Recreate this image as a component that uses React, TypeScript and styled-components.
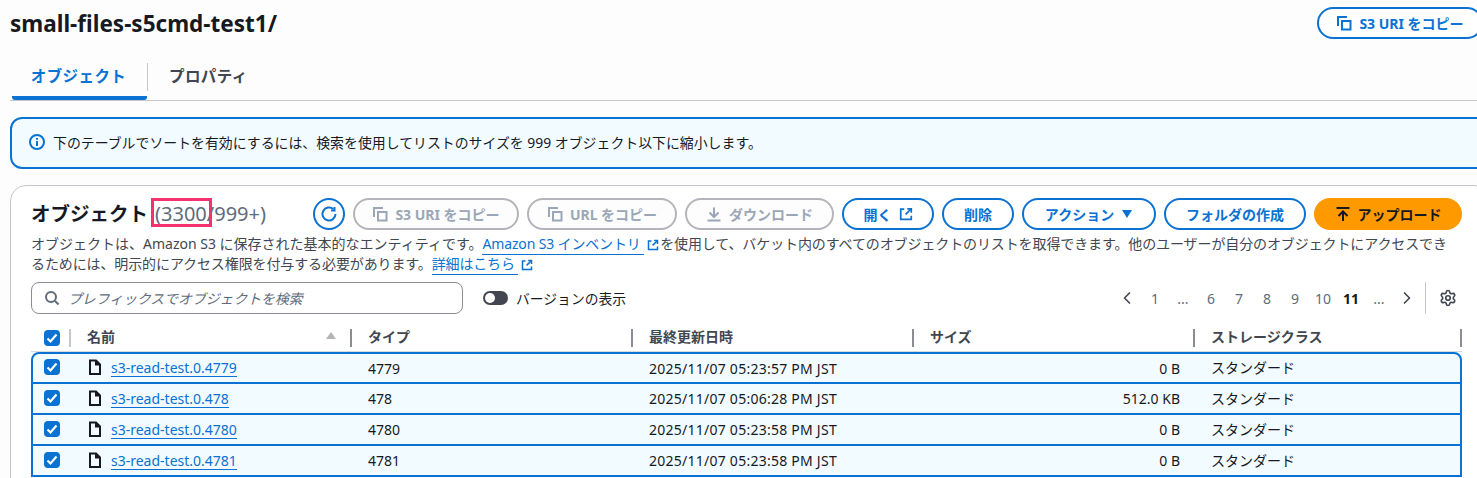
import React from "react";
import styled, { createGlobalStyle } from "styled-components";
import { ChevronLeft, ChevronRight, Settings } from "lucide-react";

const BLUE = "#0972d3";
const MUTED = "#5f6b7a";
const DISABLED = "#9ba7b6";
const INK = "#16191f";

const GlobalStyle = createGlobalStyle`
  html, body {
    margin: 0;
    height: 100%;
    overflow: hidden;
    background: #fdfdfd;
  }
  body {
    font-family: "Noto Sans", "Noto Sans CJK JP", sans-serif;
    color: ${INK};
  }
`;

const Page = styled.div`
  width: 1477px;
  height: 478px;
  overflow: hidden;
  padding-left: 10px;
  box-sizing: border-box;
`;

const TitleRow = styled.header`
  display: flex;
  justify-content: space-between;
  width: 1473px;
  height: 47px;
  padding-top: 7px;
  box-sizing: border-box;
`;

const Title = styled.h1`
  margin: 0;
  font-size: 22.5px;
  line-height: 34px;
  font-weight: 700;
  color: ${INK};
`;

const Tabs = styled.nav`
  display: flex;
  width: 1467px;
  height: 47px;
  margin-top: 7px;
  box-sizing: border-box;
  border-bottom: 1px solid #c6c6cd;
`;

const Tab = styled.div<{ $active?: boolean }>`
  width: ${(p) => (p.$active ? "135px" : "auto")};
  margin-left: ${(p) => (p.$active ? "2px" : "0")};
  padding-left: ${(p) => (p.$active ? "0" : "21px")};
  padding-right: ${(p) => (p.$active ? "2px" : "0")};
  height: 37px;
  margin-top: 9px;
  box-sizing: border-box;
  display: flex;
  align-items: center;
  justify-content: center;
  padding-bottom: ${(p) => (p.$active ? "9px" : "13px")};
  font-size: 15.5px;
  font-weight: 700;
  letter-spacing: 0.4px;
  color: ${(p) => (p.$active ? BLUE : "#414750")};
  border-bottom: ${(p) => (p.$active ? `4px solid ${BLUE}` : "none")};
  border-radius: 0 0 3px 3px;
`;

const TabDivider = styled.div`
  width: 1px;
  height: 28px;
  margin-top: 9px;
  background: #c6c6cd;
`;

const Alert = styled.div`
  width: 1480px;
  height: 52px;
  margin-top: 16px;
  box-sizing: border-box;
  border: 2px solid ${BLUE};
  border-radius: 12px;
  background: #f2fbff;
  display: flex;
  align-items: center;
  gap: 8px;
  padding: 0 0 2px 17px;
  font-size: 13.9px;
  color: ${INK};
  svg {
    color: ${BLUE};
    flex: none;
  }
`;

const Panel = styled.section`
  position: relative;
  width: 1480px;
  margin-top: 16px;
  height: 320px;
  box-sizing: border-box;
  border: 1px solid #c6c6cd;
  border-radius: 16px;
  background: #fff;
  padding: 12px 0 0 20px;
`;

const PanelHead = styled.div`
  display: flex;
  align-items: center;
  height: 32px;
`;

const Heading = styled.h2`
  margin: 0 0 3px;
  width: 124px;
  font-size: 19.5px;
  font-weight: 700;
  white-space: nowrap;
  color: ${INK};
`;

const Count = styled.span`
  width: 158px;
  margin-bottom: 2px;
  font-size: 20px;
  color: ${MUTED};
`;

const Highlight = styled.div`
  position: absolute;
  left: 140px;
  top: 12px;
  width: 61px;
  height: 29px;
  box-sizing: border-box;
  border: 3px solid #f5316f;
`;

const Actions = styled.div`
  display: flex;
  gap: 8px;
`;

const IconButton = styled.button`
  width: 32px;
  height: 32px;
  padding: 0;
  border: 2px solid ${BLUE};
  border-radius: 50%;
  background: #fff;
  color: ${BLUE};
  display: flex;
  align-items: center;
  justify-content: center;
`;

const Pill = styled.button<{ $w: number; $tone?: "normal" | "disabled" | "primary" }>`
  width: ${(p) => p.$w}px;
  height: 32px;
  padding: 0;
  box-sizing: border-box;
  border-radius: 16px;
  display: flex;
  align-items: center;
  justify-content: center;
  gap: 7px;
  font-family: inherit;
  font-size: 14px;
  font-weight: 700;
  white-space: nowrap;
  background: ${(p) =>
    p.$tone === "primary" ? "#ff9900" : p.$tone === "disabled" ? "#fdfdfd" : "#fff"};
  color: ${(p) =>
    p.$tone === "primary" ? INK : p.$tone === "disabled" ? DISABLED : BLUE};
  border: 2px solid
    ${(p) =>
      p.$tone === "primary" ? "#ff9900" : p.$tone === "disabled" ? "#b4b4bb" : BLUE};
  svg {
    flex: none;
  }
`;

const Description = styled.p`
  margin: 4px 0 0;
  width: 1425px;
  font-size: 14px;
  line-height: 20px;
  color: #414750;
`;

const Tight = styled.span`
  letter-spacing: -0.11px;
`;

const TextLink = styled.a`
  color: ${BLUE};
  border-bottom: 1px solid ${BLUE};
  padding-bottom: 1px;
  letter-spacing: -0.15px;
`;

const External = styled.span`
  display: inline-block;
  color: ${BLUE};
  margin: 0 1px 0 3px;
  vertical-align: -2px;
  line-height: 0;
`;

const Filters = styled.div`
  display: flex;
  align-items: center;
  width: 1431px;
  height: 32px;
  margin-top: 8px;
  padding-right: 6px;
  box-sizing: border-box;
`;

const Search = styled.div`
  width: 432px;
  height: 32px;
  box-sizing: border-box;
  border: 1px solid #8c8c94;
  border-radius: 8px;
  background: #fff;
  display: flex;
  align-items: center;
  gap: 8px;
  padding-left: 12px;
  font-size: 13.85px;
  font-style: italic;
  color: ${MUTED};
  svg {
    flex: none;
    color: ${MUTED};
  }
`;

const Toggle = styled.div`
  width: 25px;
  height: 14px;
  margin-left: 20px;
  border-radius: 7px;
  background: #424650;
  position: relative;
  &::after {
    content: "";
    position: absolute;
    left: 2px;
    top: 2px;
    width: 10px;
    height: 10px;
    border-radius: 50%;
    background: #fff;
  }
`;

const ToggleLabel = styled.span`
  margin-left: 8px;
  font-size: 13.8px;
  color: ${INK};
`;

const Pager = styled.div`
  margin-left: auto;
  display: flex;
  align-items: center;
  height: 32px;
  font-size: 14px;
  color: ${MUTED};
`;

const PageNo = styled.span<{ $current?: boolean }>`
  width: 28px;
  text-align: center;
  font-weight: ${(p) => (p.$current ? 700 : 400)};
  color: ${(p) => (p.$current ? INK : MUTED)};
`;

const PagerArrow = styled.span`
  width: 28px;
  display: flex;
  justify-content: center;
  color: #414750;
`;

const PagerEnd = styled.div`
  height: 32px;
  margin-left: 4px;
  padding-left: 13px;
  margin-right: -1px;
  border-left: 1px solid #c6c6cd;
  display: flex;
  align-items: center;
  color: #414750;
`;

const Grid = styled.div`
  display: grid;
  grid-template-columns: 40px 281px 281px 281px 281px 267px;
  width: 1431px;
  box-sizing: border-box;
`;

const HeaderRow = styled(Grid)`
  height: 28px;
  margin-top: 10px;
  align-items: center;
  font-size: 14px;
  font-weight: 700;
  color: #414750;
  border-bottom: 1px solid #d5dbdb;
`;

const HeadCell = styled.div`
  height: 18px;
  display: flex;
  align-items: center;
  justify-content: space-between;
  padding: 0 18px 4px 16px;
  border-right: 2px solid #8c8c94;
  box-sizing: border-box;
`;

const CheckHead = styled.div`
  height: 18px;
  padding-left: 13px;
  display: flex;
  align-items: center;
  border-right: 2px solid #c6c6cd;
  box-sizing: border-box;
`;

const SortMark = styled.i`
  width: 0;
  height: 0;
  border-left: 5px solid transparent;
  border-right: 5px solid transparent;
  border-bottom: 7px solid #b4b4bb;
  margin-right: -4px;
`;

const Row = styled(Grid)<{ $first?: boolean }>`
  height: ${(p) => (p.$first ? "32px" : "31px")};
  align-items: center;
  background: #f2fbff;
  border: 2px solid ${BLUE};
  border-top-width: ${(p) => (p.$first ? "2px" : "0")};
  border-radius: ${(p) => (p.$first ? "8px 8px 0 0" : "0")};
  font-size: 14px;
  color: ${INK};
  grid-template-columns: 38px 281px 281px 281px 281px 247px;
`;

const CheckCell = styled.div`
  padding-left: 11px;
  display: flex;
  align-items: center;
  margin-top: -2px;
`;

const Check = styled.span`
  width: 16px;
  height: 16px;
  border-radius: 4px;
  background: ${BLUE};
  display: flex;
  align-items: center;
  justify-content: center;
  flex: none;
`;

const NameCell = styled.div`
  display: flex;
  align-items: center;
  padding-left: 16px;
  gap: 8px;
  svg {
    flex: none;
    margin-top: -2px;
  }
`;

const FileLink = styled.a`
  color: ${BLUE};
  border-bottom: 1px solid ${BLUE};
  line-height: 17px;
`;

const Cell = styled.div`
  padding-left: 16px;
`;

const DateCell = styled(Cell)`
  letter-spacing: 0.25px;
`;

const ClassCell = styled(Cell)`
  padding-bottom: 2px;
`;

const SizeCell = styled.div`
  text-align: right;
  padding-right: 15px;
`;

const Svg = ({ size = 16, children }: { size?: number; children: React.ReactNode }) => (
  <svg
    width={size}
    height={size}
    viewBox="0 0 16 16"
    fill="none"
    stroke="currentColor"
    strokeWidth="2"
  >
    {children}
  </svg>
);

const CopyIcon = () => (
  <Svg>
    <path d="M2 11V2h9" />
    <rect x="6" y="6" width="8.5" height="8.5" />
  </Svg>
);

const ExternalIcon = ({ size = 14 }: { size?: number }) => (
  <Svg size={size}>
    <path d="M6 2.5H2V14h12v-4" />
    <path d="M9.5 2H14v4.5" />
    <path d="M14 2 7.5 8.5" />
  </Svg>
);

const DownloadIcon = () => (
  <Svg>
    <path d="M8 1.5V11" />
    <path d="M3.5 6.5 8 11l4.5-4.5" />
    <path d="M1.5 14.5h13" />
  </Svg>
);

const UploadIcon = () => (
  <Svg>
    <path d="M1.5 2h13" />
    <path d="M8 15V5.5" />
    <path d="M3.5 10 8 5.5l4.5 4.5" />
  </Svg>
);

const RefreshIcon = () => (
  <Svg>
    <path d="M14.5 8a6.5 6.5 0 1 1-2.2-4.9" />
    <path d="M13.5 1v3.5H10" />
  </Svg>
);

const SearchIcon = () => (
  <Svg>
    <circle cx="7" cy="7" r="5" />
    <path d="m11 11 3.5 3.5" />
  </Svg>
);

const InfoIcon = () => (
  <Svg>
    <circle cx="8" cy="8" r="7" />
    <path d="M8 7v5" />
    <path d="M8 4v1.8" />
  </Svg>
);

const FileIcon = () => (
  <svg width="16" height="16" viewBox="0 0 16 16" fill="none" stroke={INK} strokeWidth="2">
    <path d="M3 1.5h6l4 4V15H3z" />
    <path d="M9 1.5v4h4" fill={INK} />
  </svg>
);

const CheckMark = () => (
  <svg width="12" height="12" viewBox="0 0 12 12" fill="none" stroke="#fff" strokeWidth="2.2">
    <path d="m1.5 6.5 3 3 6-7" />
  </svg>
);

const CaretIcon = () => (
  <svg width="12" height="10" viewBox="0 0 12 10" fill="currentColor">
    <path d="M1 1h10L6 9z" />
  </svg>
);

const pages = ["1", "...", "6", "7", "8", "9", "10", "11", "..."];

const columns = ["タイプ", "最終更新日時", "サイズ", "ストレージクラス"];

const files = [
  { name: "s3-read-test.0.4779", type: "4779", date: "2025/11/07 05:23:57 PM JST", size: "0 B" },
  { name: "s3-read-test.0.478", type: "478", date: "2025/11/07 05:06:28 PM JST", size: "512.0 KB" },
  { name: "s3-read-test.0.4780", type: "4780", date: "2025/11/07 05:23:58 PM JST", size: "0 B" },
  { name: "s3-read-test.0.4781", type: "4781", date: "2025/11/07 05:23:58 PM JST", size: "0 B" },
];

export default function App() {
  return (
    <Page>
      <GlobalStyle />
      <TitleRow>
        <Title>small-files-s5cmd-test1/</Title>
        <Pill $w={166}>
          <CopyIcon />
          S3 URI をコピー
        </Pill>
      </TitleRow>

      <Tabs>
        <Tab $active>オブジェクト</Tab>
        <TabDivider />
        <Tab>プロパティ</Tab>
      </Tabs>

      <Alert>
        <InfoIcon />
        下のテーブルでソートを有効にするには、検索を使用してリストのサイズを 999 オブジェクト以下に縮小します。
      </Alert>

      <Panel>
        <Highlight />
        <PanelHead>
          <Heading>オブジェクト</Heading>
          <Count>(3300/999+)</Count>
          <Actions>
            <IconButton>
              <RefreshIcon />
            </IconButton>
            <Pill $w={166} $tone="disabled">
              <CopyIcon />
              S3 URI をコピー
            </Pill>
            <Pill $w={150} $tone="disabled">
              <CopyIcon />
              URL をコピー
            </Pill>
            <Pill $w={149} $tone="disabled">
              <DownloadIcon />
              ダウンロード
            </Pill>
            <Pill $w={92}>
              開く
              <ExternalIcon />
            </Pill>
            <Pill $w={72}>削除</Pill>
            <Pill $w={134}>
              アクション
              <CaretIcon />
            </Pill>
            <Pill $w={142}>フォルダの作成</Pill>
            <Pill $w={148} $tone="primary">
              <UploadIcon />
              アップロード
            </Pill>
          </Actions>
        </PanelHead>

        <Description>
          オブジェクトは、Amazon S3 に保存された基本的なエンティティです。
          <TextLink>Amazon S3 インベントリ&nbsp;</TextLink>
          <External>
            <ExternalIcon size={12} />
          </External>
          <Tight>
            を使用して、バケット内のすべてのオブジェクトのリストを取得できます。他のユーザーが自分のオブジェクトにアクセスできるためには、明示的にアクセス権限を付与する必要があります。
          </Tight>
          <TextLink>詳細はこちら&nbsp;</TextLink>
          <External>
            <ExternalIcon size={12} />
          </External>
        </Description>

        <Filters>
          <Search>
            <SearchIcon />
            プレフィックスでオブジェクトを検索
          </Search>
          <Toggle />
          <ToggleLabel>バージョンの表示</ToggleLabel>
          <Pager>
            <PagerArrow>
              <ChevronLeft size={20} strokeWidth={2} />
            </PagerArrow>
            {pages.map((n, i) => (
              <PageNo key={i} $current={n === "11"}>
                {n}
              </PageNo>
            ))}
            <PagerArrow>
              <ChevronRight size={20} strokeWidth={2} />
            </PagerArrow>
            <PagerEnd>
              <Settings size={18} strokeWidth={2.2} />
            </PagerEnd>
          </Pager>
        </Filters>

        <HeaderRow>
          <CheckHead>
            <Check>
              <CheckMark />
            </Check>
          </CheckHead>
          <HeadCell>
            名前
            <SortMark />
          </HeadCell>
          {columns.map((c) => (
            <HeadCell key={c}>{c}</HeadCell>
          ))}
        </HeaderRow>

        {files.map((f, i) => (
          <Row key={f.name} $first={i === 0}>
            <CheckCell>
              <Check>
                <CheckMark />
              </Check>
            </CheckCell>
            <NameCell>
              <FileIcon />
              <FileLink>{f.name}</FileLink>
            </NameCell>
            <Cell>{f.type}</Cell>
            <DateCell>{f.date}</DateCell>
            <SizeCell>{f.size}</SizeCell>
            <ClassCell>スタンダード</ClassCell>
          </Row>
        ))}
      </Panel>
    </Page>
  );
}
